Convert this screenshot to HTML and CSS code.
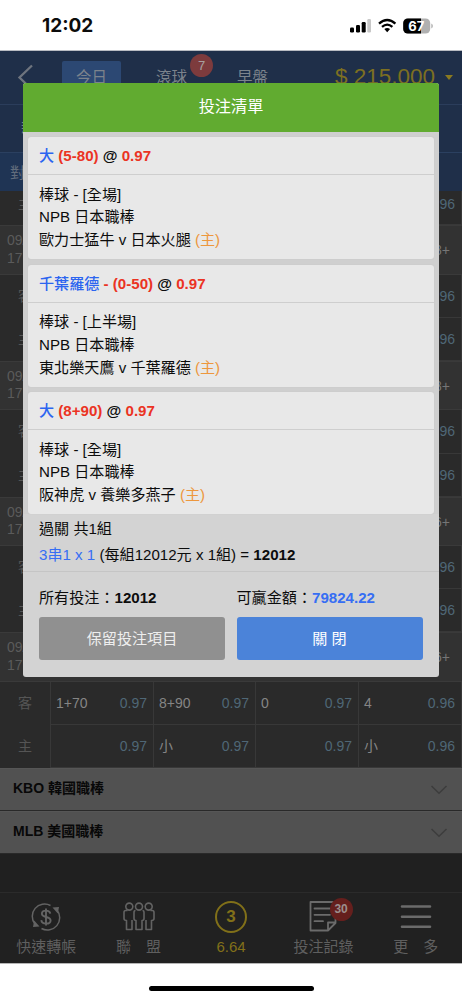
FILE: index.html
```html
<!DOCTYPE html>
<html lang="zh-Hant">
<head>
<meta charset="utf-8">
<meta name="viewport" content="width=device-width, initial-scale=1">
<title>投注清單</title>
<link rel="stylesheet" href="styles.css">
</head>
<body>
<div class="phone">
  <div class="status">
    <span class="clock">12:02</span>
    <svg class="status-icons" width="84" height="18" viewBox="0 0 84 18">
      <rect x="0" y="10.5" width="4" height="5" rx="1.2"/><rect x="6" y="8" width="4" height="7.5" rx="1.2"/><rect x="11.700" y="5" width="4" height="10.500" rx="1.2"/><rect x="17.300" y="2" width="3.700" height="13.500" rx="1.2" fill="#c8c8c8"/>
      <g fill="none" stroke="#000" stroke-width="2.300"><path d="M29 6.600 Q37.200 -0.700 45.400 6.600"/><path d="M32 9.900 Q37.200 5.300 42.400 9.900"/></g>
      <path d="M34.300 12.100 Q37.200 9.700 40.100 12.100 L37.200 15.200Z"/>
      <rect x="53.200" y="1.500" width="27" height="15" rx="4.600" fill="#b0b0b0"/>
      <path d="M57.800 1.500H71v15H57.800a4.600 4.600 0 0 1-4.600-4.600V6.100a4.600 4.600 0 0 1 4.600-4.600Z"/>
      <path d="M81.300 6.500q1.600.8 1.600 2.500t-1.600 2.500Z" fill="#b0b0b0"/>
      <text class="battery" x="66.200" y="13.600" text-anchor="middle">67</text>
    </svg>
  </div>

  <header class="topbar">
    <svg class="back" width="18" height="26" viewBox="0 0 18 26"><path d="M15 1.500 2.500 13.500 15 25.500"/></svg>
    <span class="tab tab-on">今日</span>
    <span class="tab">滾球<b class="count count-top">7</b></span>
    <span class="tab">早盤</span>
    <span class="balance">$ 215,000<i class="caret"></i></span>
  </header>
  <div class="subbar"><span>新</span></div>
  <div class="colbar"><span>對</span></div>

  <main class="odds">
    <div class="row row-first"><span class="side">主</span><span class="cell"></span><span class="cell"></span><span class="cell"></span><span class="cell"><em>0.96</em></span></div>
    <div class="match"><span class="date">09/<br>17:</span><span class="more">8+</span></div>
    <div class="row"><span class="side">客</span><span class="cell"></span><span class="cell"></span><span class="cell"></span><span class="cell"><em>0.96</em></span></div>
    <div class="row"><span class="side">主</span><span class="cell"></span><span class="cell"></span><span class="cell"></span><span class="cell"><em>0.96</em></span></div>
    <div class="match"><span class="date">09/<br>17:</span><span class="more">8+</span></div>
    <div class="row"><span class="side">客</span><span class="cell"></span><span class="cell"></span><span class="cell"></span><span class="cell"><em>0.96</em></span></div>
    <div class="row"><span class="side">主</span><span class="cell"></span><span class="cell"></span><span class="cell"></span><span class="cell"><em>0.96</em></span></div>
    <div class="match"><span class="date">09/<br>17:</span><span class="more">6+</span></div>
    <div class="row"><span class="side">客</span><span class="cell"></span><span class="cell"></span><span class="cell"></span><span class="cell"><em>0.96</em></span></div>
    <div class="row"><span class="side">主</span><span class="cell"></span><span class="cell"></span><span class="cell"></span><span class="cell"><em>0.96</em></span></div>
    <div class="match"><span class="date">09/<br>17:</span><span class="more">6+</span></div>
    <div class="row"><span class="side side-top">客</span><span class="cell">1+70<em>0.97</em></span><span class="cell">8+90<em>0.97</em></span><span class="cell">0<em>0.97</em></span><span class="cell">4<em>0.96</em></span></div>
    <div class="row"><span class="side">主</span><span class="cell"><em>0.97</em></span><span class="cell">小<em>0.97</em></span><span class="cell"><em>0.97</em></span><span class="cell">小<em>0.96</em></span></div>
  </main>

  <div class="league"><span>KBO 韓國職棒</span><svg width="18" height="10" viewBox="0 0 18 10"><path d="M1.500 1 9 8.300 16.500 1"/></svg></div>
  <div class="league"><span>MLB 美國職棒</span><svg width="18" height="10" viewBox="0 0 18 10"><path d="M1.500 1 9 8.300 16.500 1"/></svg></div>
  <div class="spacer"></div>

  <nav class="nav">
    <div class="item">
      <svg width="30" height="34" viewBox="0 0 30 34" fill="none" stroke="#636363" stroke-width="1.500">
        <path d="M19.500 5.500A12.300 12.300 0 0 0 4 24M10.500 28.500A12.300 12.300 0 0 0 26 10"/>
        <path d="M21.500 7.500 28 7 26.800 13.500ZM8.500 26.500 2 27 3.200 20.500Z" fill="#636363" stroke="none"/>
        <path d="M19.300 13.600c-.4-2-2-3-4.300-3-2.500 0-4.100 1.200-4.100 3.100 0 4.500 8.700 2 8.700 6.700 0 2-1.800 3.200-4.500 3.200s-4.500-1.200-4.800-3.500M15 8.500V25.500" stroke-width="1.900"/>
      </svg>
      <span>快速轉帳</span>
    </div>
    <div class="item">
      <svg width="34" height="34" viewBox="0 0 34 34" fill="#212121" stroke="#636363" stroke-width="1.600" stroke-linejoin="round">
        <path d="M5.500 10.500H3.700Q2 10.500 2 12.500V18.500Q2 20.500 4.500 20.500V29.500H10V20M28.500 10.500H30.300Q32 10.500 32 12.500V18.500Q32 20.500 29.500 20.500V29.500H24V20"/>
        <path d="M13.500 10.500Q12 10.500 12 12.500V18.500Q12 20.500 14 20.500V29.500H20V20.500Q22 20.500 22 18.500V12.500Q22 10.500 20.500 10.500"/>
        <circle cx="7.300" cy="6.600" r="3.500"/><circle cx="17" cy="6.600" r="3.500"/><circle cx="26.700" cy="6.600" r="3.500"/>
      </svg>
      <span>聯　盟</span>
    </div>
    <div class="item item-on">
      <b class="slip">3</b>
      <span>6.64</span>
    </div>
    <div class="item">
      <svg width="30" height="34" viewBox="0 0 30 34" fill="none" stroke="#6b6b6b" stroke-width="1.800" stroke-linejoin="round" stroke-linecap="round">
        <path d="M27.500 12V23L20 30.500H2.500V2H25M27.500 22.500H20V30.500M6.500 8.500H22M6.500 14.800H22M6.500 21.200H15"/>
      </svg>
      <b class="count count-nav">30</b>
      <span>投注記錄</span>
    </div>
    <div class="item">
      <svg width="32" height="34" viewBox="0 0 32 34" stroke="#6b6b6b" stroke-width="2.600" stroke-linecap="round"><path d="M2 6.500H30M2 16.800H30M2 26.800H30"/></svg>
      <span>更　多</span>
    </div>
  </nav>
  <div class="home"><i></i></div>

  <section class="modal">
    <h1>投注清單</h1>
    <div class="bets">
      <article class="bet">
        <h2><span class="pick">大</span> <span class="odd">(5-80)</span> @ <span class="odd">0.97</span></h2>
        <p>棒球 - [全場]<br>NPB 日本職棒<br>歐力士猛牛 v 日本火腿 <span class="home-team">(主)</span></p>
      </article>
      <article class="bet">
        <h2><span class="pick">千葉羅德</span> <span class="odd">- (0-50)</span> @ <span class="odd">0.97</span></h2>
        <p>棒球 - [上半場]<br>NPB 日本職棒<br>東北樂天鷹 v 千葉羅德 <span class="home-team">(主)</span></p>
      </article>
      <article class="bet">
        <h2><span class="pick">大</span> <span class="odd">(8+90)</span> @ <span class="odd">0.97</span></h2>
        <p>棒球 - [全場]<br>NPB 日本職棒<br>阪神虎 v 養樂多燕子 <span class="home-team">(主)</span></p>
      </article>
    </div>
    <div class="parlay">過關 共1組<br><span class="blue">3串1 x 1</span> (每組12012元 x 1組) = <b>12012</b></div>
    <div class="totals">
      <div>所有投注：<b>12012</b></div>
      <div>可贏金額：<b class="blue">79824.22</b></div>
      <button class="btn btn-keep">保留投注項目</button>
      <button class="btn btn-close">關 閉</button>
    </div>
  </section>
</div>
</body>
</html>
```

FILE: styles.css
```css
* { box-sizing: border-box; }
body {
  margin: 0;
  background: #fff;
  font-family: "Liberation Sans", "Noto Sans CJK TC", sans-serif;
  font-size: 15px;
  color: #0c0c0c;
}
.phone { position: relative; width: 462px; height: 1000px; overflow: hidden; display: flex; flex-direction: column; }
.phone > * { flex: none; }
em, i { font-style: normal; }

.status { height: 51px; border-bottom: 1px solid #b9bcc2; display: flex; justify-content: space-between; align-items: center; padding: 2px 28px 0 42px; }
.clock { font: 700 19px/24px Inter, sans-serif; }
.battery { font: 700 13px Inter, sans-serif; fill: #fff; }

.topbar { height: 54px; background: #1f2f49; border-bottom: 1px solid #2b3d5b; display: flex; align-items: flex-start; padding: 10px 9px 0 17px; color: #7c838c; }
.back { margin: 3px 27px 0 0; fill: none; stroke: #6e747e; stroke-width: 2.300; }
.tab { position: relative; height: 32px; padding: 0 15px; margin-right: 20px; font-size: 15.500px; line-height: 33px; }
.tab-on { background: #2c4873; border-radius: 2px; padding: 0 14px; }
.count { position: absolute; width: 23px; height: 23px; border-radius: 50%; font: 700 12px/23px "Liberation Sans", sans-serif; text-align: center; }
.count-top { right: -11px; top: -7px; background: #7d3b3d; color: #a7a0a0; font-size: 13px; font-weight: 400; }
.balance { margin-left: auto; display: flex; align-items: center; gap: 10px; font-size: 22.500px; line-height: 32px; color: #7d6f21; white-space: nowrap; }
.caret { border: 4px solid transparent; border-top: 5px solid #8a7a20; border-bottom: 0; }
.subbar { height: 48px; background: #1f2f49; border-bottom: 1px solid #2b4060; padding: 11px 0 0 21px; color: #7c838c; }
.colbar { height: 38px; background: linear-gradient(90deg, #1f3454 50px, #1f2f49 50px); padding: 0 0 0 10px; line-height: 40px; color: #626d7c; }

.odds { height: 577.100px; background: #2a2a2a; color: #858585; font-size: 14px; }
.row { height: 43.100px; display: grid; grid-template-columns: 51px 103px 102px 103px 103px; line-height: 42px; }
.row-first { height: 34.300px; line-height: 26px; }
.side { text-align: center; border-right: 1px solid #383838; color: #555; }
.cell { display: flex; justify-content: space-between; padding: 0 6px 0 5px; border-right: 1px solid #383838; border-bottom: 1px solid #383838; }
.cell em { margin-left: auto; color: #4f6776; }
.match { height: 49.500px; background: #323232; border-top: 1px solid #3a3a3a; border-bottom: 1px solid #3a3a3a; display: flex; justify-content: space-between; padding: 6px 12px 0 7px; font-size: 14px; }
.date { line-height: 17.500px; color: #5b5b5b; width: 44px; }
.more { line-height: 36px; color: #767676; }

.league { height: 43px; background: #515151; border-bottom: 1px solid #292929; border-top: 1px solid #565656; display: flex; align-items: center; justify-content: space-between; padding: 0 14px 0 13px; font-size: 14px; line-height: 20px; font-weight: 700; color: #080808; }
.league span { padding-bottom: 3px; }
.league svg { fill: none; stroke: #3d3d3d; stroke-width: 1.500; }
.spacer { height: 38px; background: #202020; }
.nav { height: 71px; background: #212121; border-top: 1px solid #2b2b2b; display: grid; grid-template-columns: repeat(5, 1fr); }
.item { position: relative; display: flex; flex-direction: column; align-items: center; padding-top: 7px; color: #5f5f5f; line-height: 26px; }
.item-on { color: #817019; }
.slip { width: 32px; height: 32px; margin: 1px 0; border: 2px solid #817019; border-radius: 50%; font-size: 17px; line-height: 28px; text-align: center; }
.count-nav { right: 17px; top: 5px; background: #651f1d; color: #9c8f8e; }
.home { height: 37px; border-top: 1px solid #b5b5b5; display: flex; justify-content: center; padding-top: 22px; background: #fff; }
.home i { width: 165px; height: 5px; border-radius: 3px; background: #000; }

.modal { position: absolute; left: 23px; top: 83px; width: 416px; height: 594px; border-radius: 3px; overflow: hidden; background: #d3d3d3; }
.modal h1 { margin: 0; height: 49px; background: #61ab30; color: #fff; font-size: 16.200px; font-weight: 400; line-height: 47px; text-align: center; }
.bets { display: flex; flex-direction: column; gap: 5.500px; padding: 5px 5px 0; background: #cfcfcf; height: 382px; }
.bet { height: 122px; border-radius: 3px; background: #e8e8e8; box-shadow: 0 0 1px #bdbdbd; }
.bet h2 { margin: 0; height: 38px; border-bottom: 1px solid #cecece; padding-left: 11px; font-size: 15.100px; line-height: 37px; font-weight: 700; }
.pick { color: #2c65f0; font-weight: 500; }
.odd { color: #eb3323; }
.bet p { margin: 0; padding: 8.500px 0 0 11px; line-height: 22.800px; font-size: 15.100px; }
.home-team { color: #ed973d; }
.blue { color: #366ef3; }
.parlay { height: 58px; padding: 2px 0 0 16px; font-size: 15.100px; line-height: 26px; border-bottom: 1px solid #c5c5c5; }
.totals { display: grid; grid-template-columns: 186px 186px; grid-template-rows: 26px 43px; column-gap: 11.500px; row-gap: 7px; padding: 12px 16px 0 16px; font-size: 15.100px; line-height: 27px; }
.btn { border: 0; border-radius: 3px; padding: 0; color: #fff; font: 400 15.100px/43px "Liberation Sans", "Noto Sans CJK TC", sans-serif; }
.btn-keep { background: #909090; color: #eee; }
.btn-close { background: #4b83d9; }
```
